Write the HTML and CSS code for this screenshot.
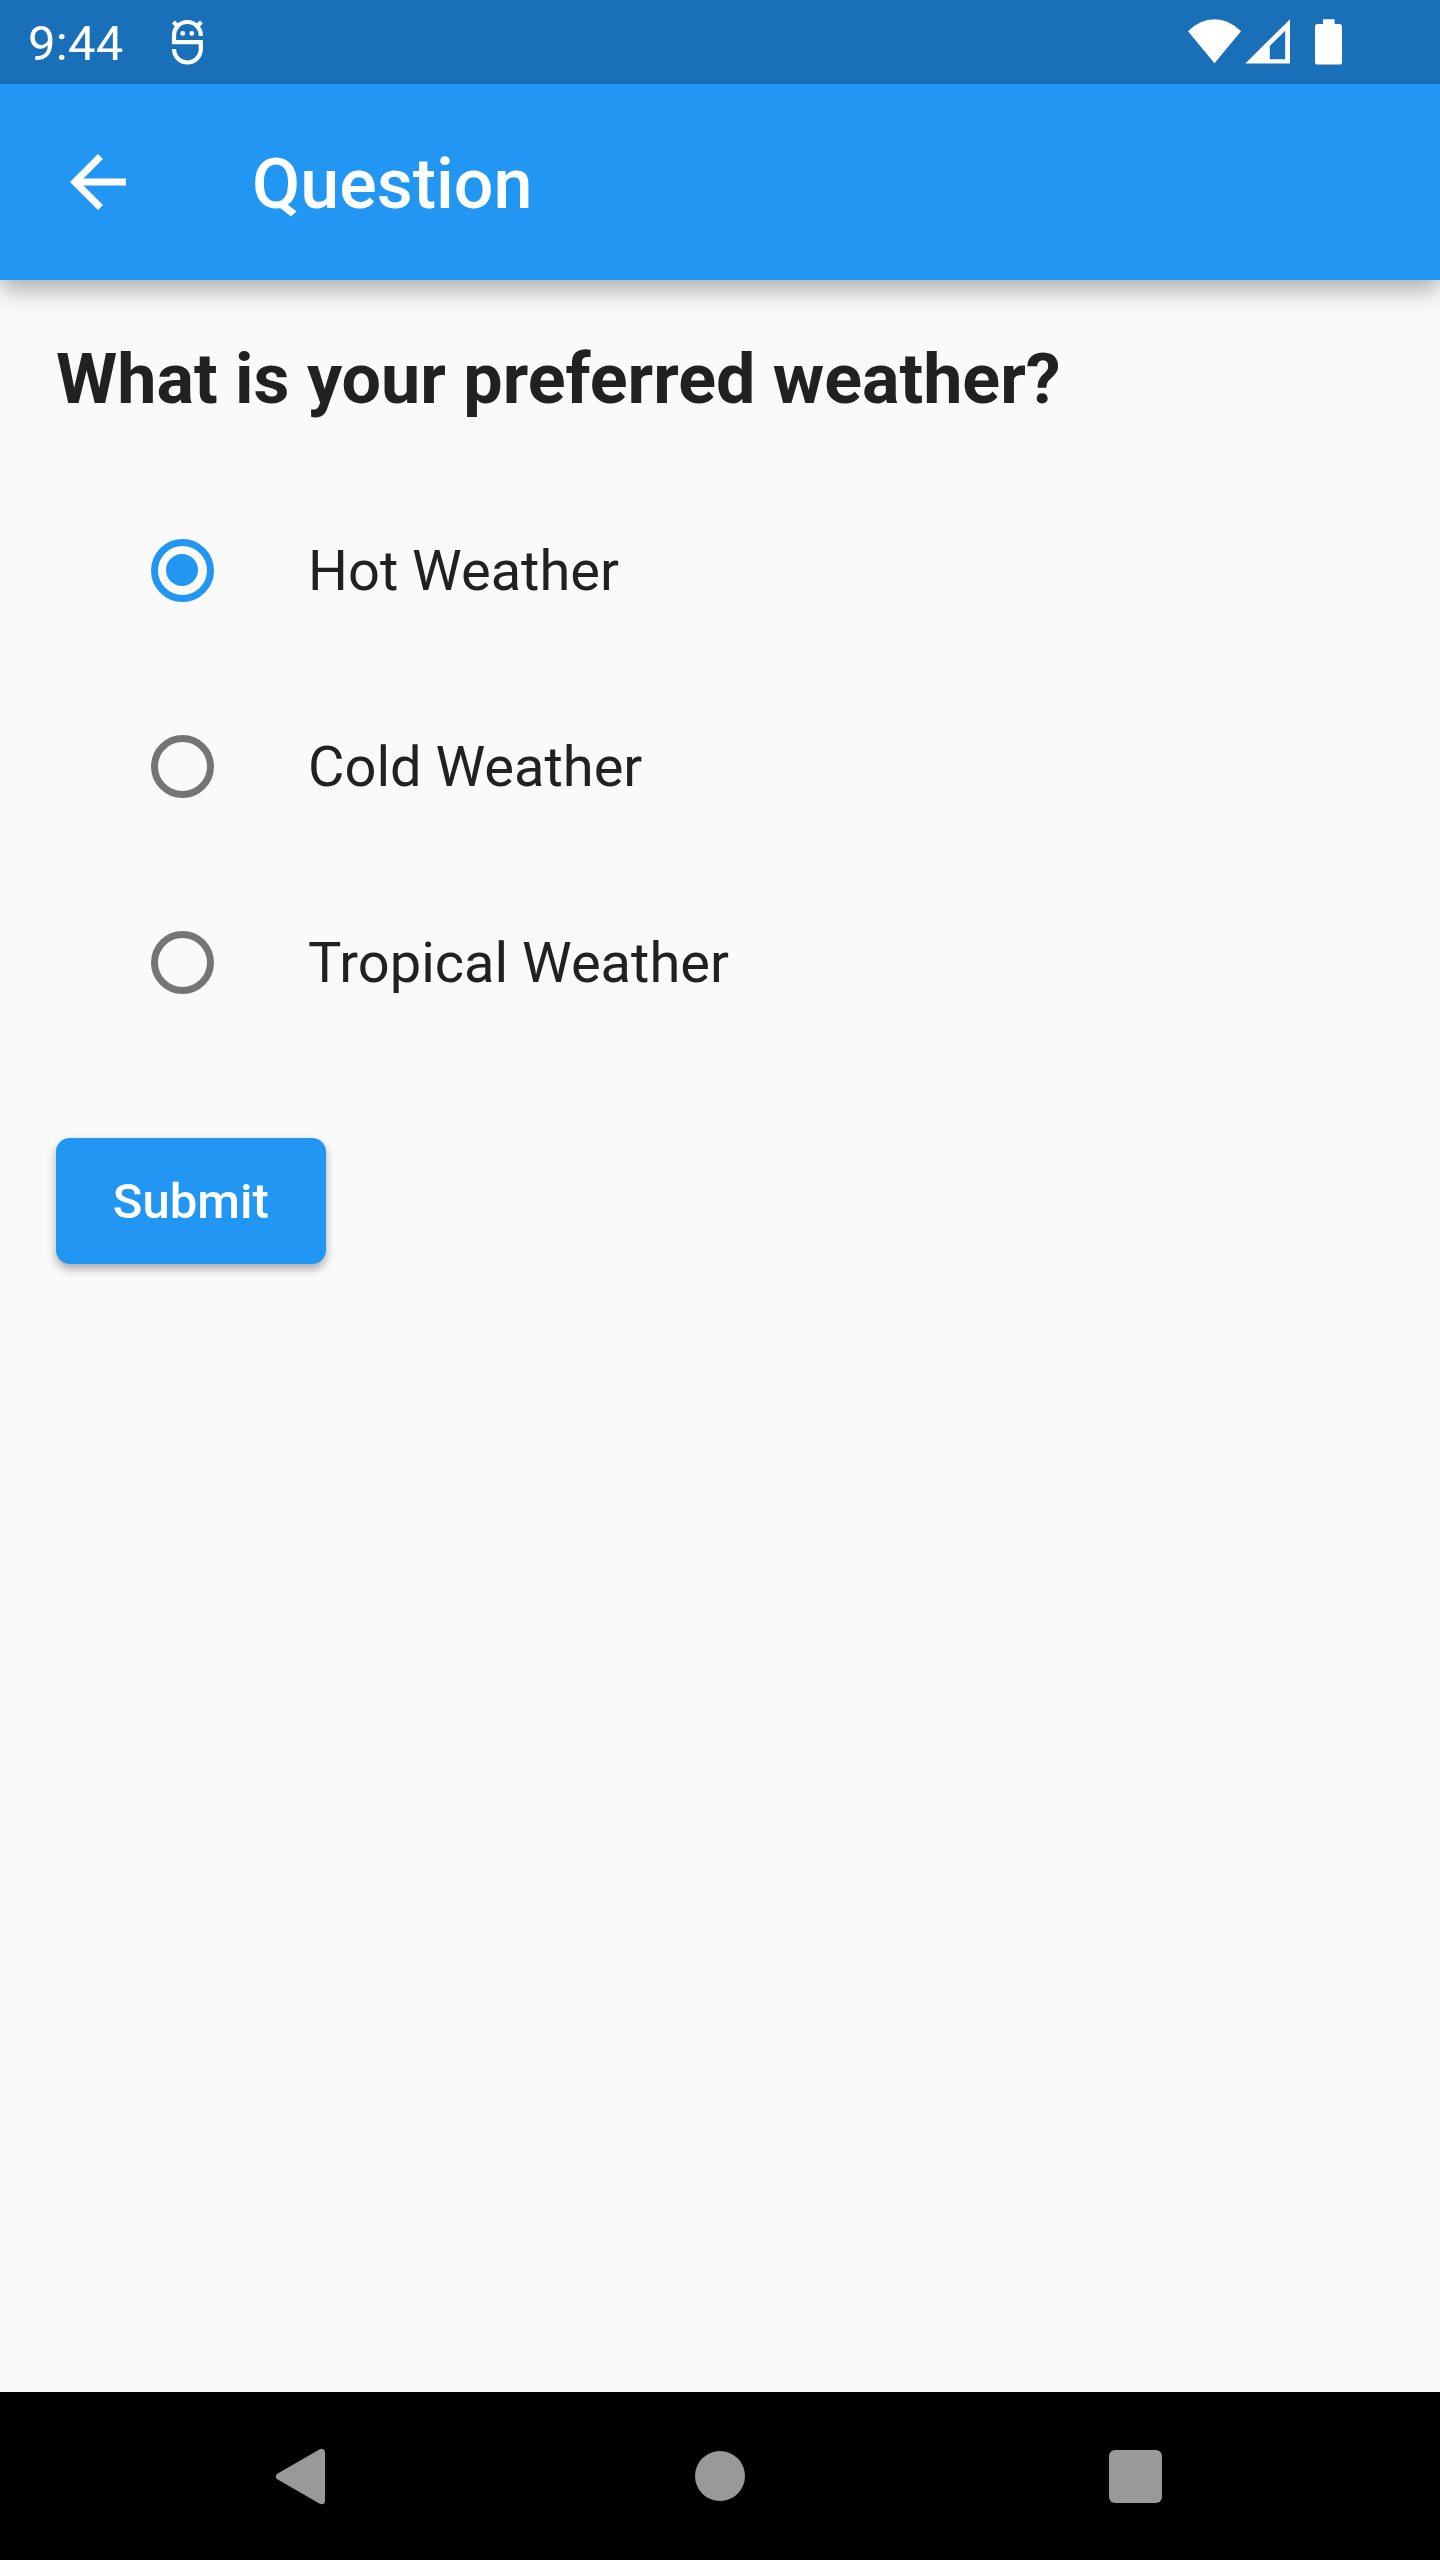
FILE: index.html
```html
<!DOCTYPE html>
<html lang="en">
<head>
<meta charset="utf-8">
<title>Question</title>
<link rel="stylesheet" href="styles.css">
</head>
<body>
<div class="screen">
  <div class="status-bar">
    <span class="clock">9:44</span>
    <svg class="debug-icon" width="36" height="48" viewBox="169 18 36 48">
      <g fill="none" stroke="#fff" stroke-width="4.2">
        <path d="M200.8 36V35.4A13.4 13.4 0 0 0 174 35.4V42.2H200.8V49.1A13.4 13.4 0 0 1 174 49.1"/>
        <path d="M173.4 22L178.5 27M201.4 22L196.3 27"/>
      </g>
      <circle cx="182.7" cy="33.4" r="2.4" fill="#fff"/>
      <circle cx="191.8" cy="33.4" r="2.4" fill="#fff"/>
    </svg>
    <svg class="system-icons" width="156" height="48" viewBox="1187 18 156 48" fill="#fff">
      <path d="M1188 31.2Q1200 19.2 1214.5 19.2T1241 31.2L1214.5 63.2Z"/>
      <path fill-rule="evenodd" d="M1245.3 63.6L1290 19.2V63.6ZM1269.8 46V59.3H1285.2V30.7Z"/>
      <path d="M1323 24V19.3H1334.6V24H1339.5Q1342 24 1342 26.5V62Q1342 64.6 1339.5 64.6H1317.5Q1315 64.6 1315 62V26.5Q1315 24 1317.5 24Z"/>
    </svg>
  </div>
  <header class="app-bar">
    <svg width="84" height="84" viewBox="0 0 24 24" fill="#fff"><path d="M20 11H7.83l5.59-5.59L12 4l-8 8 8 8 1.41-1.41L7.83 13H20v-2z"/></svg>
    <h1 class="app-title">Question</h1>
  </header>
  <main class="content">
    <h2 class="question">What is your preferred weather?</h2>
    <div class="options">
      <div class="option"><span class="radio radio-selected"></span><span class="option-label">Hot Weather</span></div>
      <div class="option"><span class="radio"></span><span class="option-label">Cold Weather</span></div>
      <div class="option"><span class="radio"></span><span class="option-label">Tropical Weather</span></div>
    </div>
    <button class="submit" type="button">Submit</button>
  </main>
  <nav class="nav-bar">
    <svg width="50" height="57" viewBox="0 0 50 57"><path d="M3.5 28.5L45.5 4.3V52.7Z" fill="#999" stroke="#999" stroke-width="7" stroke-linejoin="round"/></svg>
    <span class="nav-home"></span>
    <span class="nav-recent"></span>
  </nav>
</div>
</body>
</html>
```
FILE: styles.css
```css
* { box-sizing: border-box; }
body { margin: 0; font-family: Roboto, sans-serif; color: #212121; }
.screen { width: 1440px; height: 2560px; display: flex; flex-direction: column; background: #fafafa; overflow: hidden; }

.status-bar { position: relative; z-index: 1; height: 84px; flex: none; display: flex; align-items: center; padding: 0 97px 0 28px; background: #1a70b8; color: #fff; }
.clock { width: 141px; font-size: 49px; line-height: 58px; padding-top: 3px; letter-spacing: .3px; }
.system-icons { margin-left: auto; }

.app-bar { height: 196px; flex: none; display: flex; align-items: center; gap: 112px; padding-left: 56px; background: #2196f3; color: #fff; box-shadow: 0 10px 22px rgba(0, 0, 0, .31); }
.app-title { margin: 0; font-size: 70px; line-height: 82px; font-weight: 500; padding-top: 4px; }

.content { flex: 1; padding: 56px; }
.question { margin: 0; padding-top: 2px; font-size: 70px; line-height: 82px; font-weight: 700; white-space: nowrap; }
.options { margin-top: 52px; }
.option { height: 196px; display: flex; align-items: center; gap: 94.5px; padding-left: 94.5px; }
.radio { width: 63px; height: 63px; border: 7px solid #757575; border-radius: 50%; }
.radio-selected { display: grid; place-items: center; border-color: #2196f3; }
.radio-selected::after { content: ""; width: 32px; height: 32px; border-radius: 50%; background: #2196f3; }
.option-label { font-size: 56px; line-height: 66px; padding-top: 2px; }
.submit { display: block; width: 269.5px; height: 126px; margin-top: 77.5px; padding: 2px 0 0; border: 0; border-radius: 14px; background: #2196f3; color: #fff; font: 500 49px/58px Roboto, sans-serif; box-shadow: 0 5px 10px rgba(0, 0, 0, .32); }

.nav-bar { height: 168px; flex: none; display: flex; align-items: center; justify-content: space-between; padding: 0 278.5px 0 276px; background: #000; }
.nav-home { width: 50px; height: 50px; margin-left: 89.5px; margin-right: 84px; border-radius: 50%; background: #999; }
.nav-recent { width: 53px; height: 53px; border-radius: 6px; background: #999; }
```
